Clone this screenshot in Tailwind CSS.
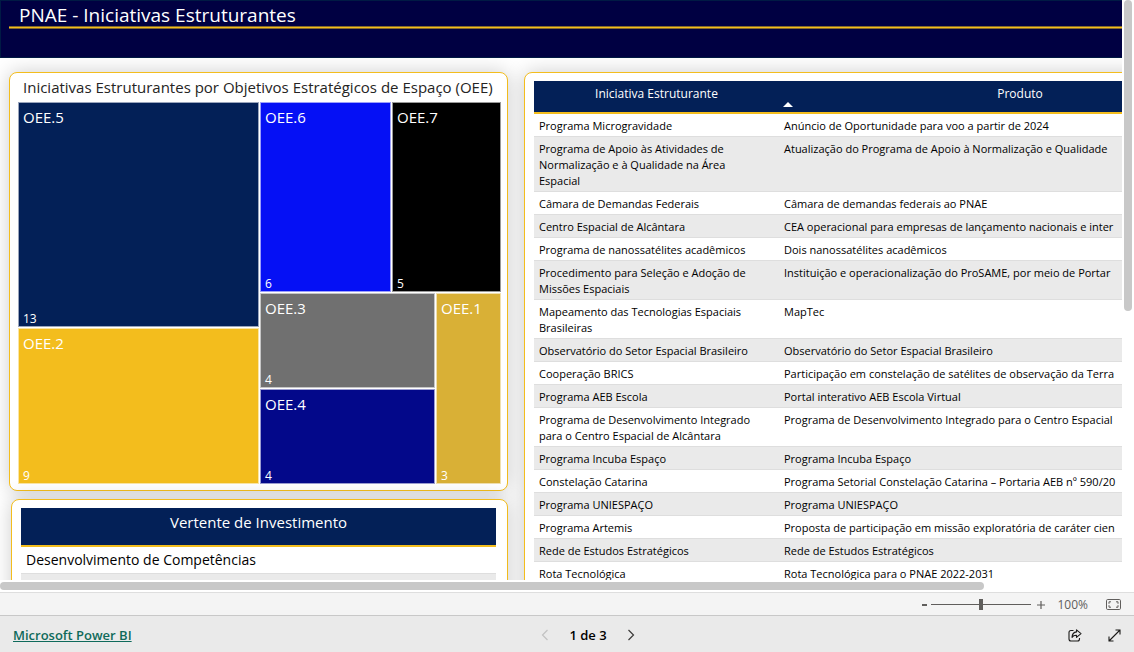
<!DOCTYPE html>
<html lang="pt-BR">
<head>
<meta charset="utf-8">
<title>PNAE - Iniciativas Estruturantes</title>
<script src="https://cdn.jsdelivr.net/npm/@tailwindcss/browser@4"></script>
</head>
<body class="flex h-screen flex-col overflow-hidden bg-white font-['Open_Sans','Noto_Sans',sans-serif] text-black">

<div class="flex min-h-0 flex-1">
  <div class="flex min-w-0 flex-1 flex-col overflow-hidden">
    <header class="h-[58px] shrink-0 border border-r-0 border-[#001a44] bg-[#000042] pl-2">
      <h1 class="h-[25px] pl-[10px] text-[19px] leading-[28px] text-white">PNAE - Iniciativas Estruturantes</h1>
      <div class="h-[3px] border-y border-[#84682c] bg-[#f3bd1d]"></div>
    </header>

    <main class="flex min-h-0 flex-1 gap-4 pt-[14px] pl-[9px]">
      <div class="flex w-[499px] shrink-0 flex-col gap-2">
        <section class="flex h-[419px] shrink-0 flex-col rounded-lg border border-[#f3bd1d] bg-white pr-[6px] pb-[6px] pl-2 shadow-[0_0_20px_rgba(0,0,0,0.2)]">
          <h2 class="h-[29px] pl-[5px] text-[15px] leading-[29px] whitespace-nowrap text-[#252423]">Iniciativas Estruturantes por Objetivos Estratégicos de Espaço (OEE)</h2>
          <div class="grid min-h-0 flex-1 grid-cols-2 gap-px text-[12px] leading-[14px] text-white">
            <div class="flex flex-col gap-px">
              <div class="flex h-[225px] flex-col justify-between border border-white/60 bg-[#032057] px-1 pt-1"><span class="text-[15px] leading-5">OEE.5</span><span>13</span></div>
              <div class="flex flex-1 flex-col justify-between border border-white/60 bg-[#f3bd1d] px-1 pt-1"><span class="text-[15px] leading-5">OEE.2</span><span>9</span></div>
            </div>
            <div class="flex flex-col gap-px">
              <div class="grid h-[190px] grid-cols-[131fr_109fr] gap-px">
                <div class="flex flex-col justify-between border border-white/60 bg-[#0510f5] px-1 pt-1"><span class="text-[15px] leading-5">OEE.6</span><span>6</span></div>
                <div class="flex flex-col justify-between border border-white/60 bg-black px-1 pt-1"><span class="text-[15px] leading-5">OEE.7</span><span>5</span></div>
              </div>
              <div class="grid flex-1 grid-cols-[175fr_65fr] gap-px">
                <div class="flex flex-col gap-px">
                  <div class="flex flex-1 flex-col justify-between border border-white/60 bg-[#707070] px-1 pt-1"><span class="text-[15px] leading-5">OEE.3</span><span>4</span></div>
                  <div class="flex flex-1 flex-col justify-between border border-white/60 bg-[#03088a] px-1 pt-1"><span class="text-[15px] leading-5">OEE.4</span><span>4</span></div>
                </div>
                <div class="flex flex-col justify-between border border-white/60 bg-[#d9b036] px-1 pt-1"><span class="text-[15px] leading-5">OEE.1</span><span>3</span></div>
              </div>
            </div>
          </div>
        </section>

        <section class="ml-[2px] h-[200px] shrink-0 rounded-lg border border-[#f3bd1d] bg-white pt-2 pr-[11px] pl-[9px] shadow-[0_0_20px_rgba(0,0,0,0.2)]">
          <table class="w-full border-separate border-spacing-0 text-left text-[14px] leading-5">
            <thead><tr class="h-[39px] bg-[#032057]"><th class="border-b-2 border-[#f3bd1d] pt-1 text-center align-top text-[15px] font-normal text-white">Vertente de Investimento</th></tr></thead>
            <tbody>
              <tr class="h-[27px]"><td class="border-b border-[#dedede] px-[5px]">Desenvolvimento de Competências</td></tr>
              <tr class="h-[27px] bg-[#eaeaea]"><td></td></tr>
            </tbody>
          </table>
        </section>
      </div>

      <section class="h-[600px] w-[747px] shrink-0 rounded-lg border border-[#f3bd1d] bg-white px-[9px] pt-2 shadow-[0_0_20px_rgba(0,0,0,0.2)]">
        <table class="w-full table-fixed border-separate border-spacing-0 text-left text-[11px] leading-4 [&_td]:border-b [&_td]:border-[#dedede] [&_td]:pt-1 [&_td]:pr-4 [&_td]:pb-[2px] [&_td]:pl-[5px] [&_td]:align-top">
          <colgroup><col class="w-[245px]"><col></colgroup>
          <thead>
            <tr class="h-[33px] bg-[#032057] text-[12px] text-white">
              <th class="border-b-2 border-[#f3bd1d] pt-[5px] text-center align-top font-medium">Iniciativa Estruturante</th>
              <th aria-sort="ascending" class="relative border-b-2 border-[#f3bd1d] pt-[5px] text-center align-top font-medium">Produto
                <svg class="absolute bottom-[5px] left-1" width="10" height="5" viewBox="0 0 10 5"><path d="M0 5L5 0L10 5Z" fill="#fff"/></svg>
              </th>
            </tr>
          </thead>
          <tbody class="[&_tr:nth-child(even)]:bg-[#eaeaea] [&_td:last-child]:whitespace-nowrap">
            <tr><td>Programa Microgravidade</td><td>Anúncio de Oportunidade para voo a partir de 2024</td></tr>
            <tr><td>Programa de Apoio às Atividades de Normalização e à Qualidade na Área Espacial</td><td>Atualização do Programa de Apoio à Normalização e Qualidade</td></tr>
            <tr><td>Câmara de Demandas Federais</td><td>Câmara de demandas federais ao PNAE</td></tr>
            <tr><td>Centro Espacial de Alcântara</td><td>CEA operacional para empresas de lançamento nacionais e inter</td></tr>
            <tr><td>Programa de nanossatélites acadêmicos</td><td>Dois nanossatélites acadêmicos</td></tr>
            <tr><td>Procedimento para Seleção e Adoção de Missões Espaciais</td><td>Instituição e operacionalização do ProSAME, por meio de Portar</td></tr>
            <tr><td>Mapeamento das Tecnologias Espaciais Brasileiras</td><td>MapTec</td></tr>
            <tr><td>Observatório do Setor Espacial Brasileiro</td><td>Observatório do Setor Espacial Brasileiro</td></tr>
            <tr><td>Cooperação BRICS</td><td>Participação em constelação de satélites de observação da Terra</td></tr>
            <tr><td>Programa AEB Escola</td><td>Portal interativo AEB Escola Virtual</td></tr>
            <tr><td>Programa de Desenvolvimento Integrado para o Centro Espacial de Alcântara</td><td>Programa de Desenvolvimento Integrado para o Centro Espacial</td></tr>
            <tr><td>Programa Incuba Espaço</td><td>Programa Incuba Espaço</td></tr>
            <tr><td>Constelação Catarina</td><td>Programa Setorial Constelação Catarina – Portaria AEB nº 590/20</td></tr>
            <tr><td>Programa UNIESPAÇO</td><td>Programa UNIESPAÇO</td></tr>
            <tr><td>Programa Artemis</td><td>Proposta de participação em missão exploratória de caráter cien</td></tr>
            <tr><td>Rede de Estudos Estratégicos</td><td>Rede de Estudos Estratégicos</td></tr>
            <tr><td>Rota Tecnológica</td><td>Rota Tecnológica para o PNAE 2022-2031</td></tr>
          </tbody>
        </table>
      </section>
    </main>
  </div>
  <div class="w-3 shrink-0 px-[2px]"><div class="h-[311px] rounded-full bg-[#c8c8c8]"></div></div>
</div>
<div class="h-3 shrink-0 py-[2px]"><div class="h-2 w-[984px] rounded-full bg-[#c8c8c8]"></div></div>

<div class="flex h-[23px] shrink-0 items-center justify-end border-t border-[#dedede] bg-[#f4f4f4] pt-px pr-[13px] text-[12px] text-[#605e5c]">
  <button aria-label="Diminuir zoom" class="flex size-3 items-center justify-center"><svg width="5" height="2"><path d="M0 0H5V2H0Z" fill="#605e5c"/></svg></button>
  <input type="range" min="0" max="100" value="50" aria-label="Zoom" class="mx-px h-3 w-[100px] appearance-none bg-transparent [&::-webkit-slider-runnable-track]:h-px [&::-webkit-slider-runnable-track]:bg-[#605e5c] [&::-webkit-slider-thumb]:-mt-[5px] [&::-webkit-slider-thumb]:h-[11px] [&::-webkit-slider-thumb]:w-1 [&::-webkit-slider-thumb]:appearance-none [&::-webkit-slider-thumb]:bg-[#605e5c]">
  <button aria-label="Aumentar zoom" class="ml-[3px] flex size-3 items-center justify-center"><svg width="8" height="8" viewBox="0 0 8 8"><path d="M0 4H8M4 0V8" stroke="#605e5c" stroke-width="1.2"/></svg></button>
  <span class="w-[41px] text-right">100%</span>
  <button aria-label="Ajustar à página" class="ml-[18px]"><svg width="15" height="11" viewBox="0 0 15 11" fill="none" stroke="#605e5c"><rect x=".5" y=".5" width="14" height="10" rx="1.2"/><path d="M5 2.8H3V4.8M3 6.2V8.2H5M10 2.8H12V4.8M12 6.2V8.2H10"/></svg></button>
</div>

<footer class="grid h-[37px] shrink-0 grid-cols-3 items-center border-t border-[#c8c8c8] bg-[#eaeaea] px-[13px] pt-[2px]">
  <a href="#" class="justify-self-start text-[13px] leading-5 font-semibold text-[#0f6a5b] underline">Microsoft Power BI</a>
  <nav class="ml-[42px] flex items-center justify-center gap-5 justify-self-center text-[13px] leading-5 font-semibold whitespace-nowrap" aria-label="Páginas">
    <button aria-label="Página anterior" disabled><svg width="8" height="12" viewBox="0 0 8 12" fill="none" stroke="#c2c2c2" stroke-width="1.2"><path d="M6.5 1L1.500 6L6.500 11"/></svg></button>
    <span>1 de 3</span>
    <button aria-label="Próxima página"><svg width="8" height="12" viewBox="0 0 8 12" fill="none" stroke="#3b3a39" stroke-width="1.2"><path d="M1.500 1L6.500 6L1.500 11"/></svg></button>
  </nav>
  <div class="flex items-center gap-[26px] justify-self-end">
    <button aria-label="Compartilhar"><svg width="14" height="13" viewBox="0 0 14 13" fill="none" stroke="#1b1a19" stroke-width="1.1" stroke-linejoin="round"><path d="M5.500 1.500H3Q1 1.500 1 3.500V10Q1 12 3 12H9.500Q11.500 12 11.500 10V9"/><path d="M8.500 .8L13 4.600L8.500 8.300V6.200Q5.500 6 4 8.400Q4.300 3.400 8.500 2.900Z"/></svg></button>
    <button aria-label="Tela inteira"><svg width="13" height="13" viewBox="0 0 13 13" fill="none" stroke="#1b1a19" stroke-width="1.1"><path d="M1 12L12 1M7.500 1H12V5.500M1 7.500V12H5.500"/></svg></button>
  </div>
</footer>
</body>
</html>
